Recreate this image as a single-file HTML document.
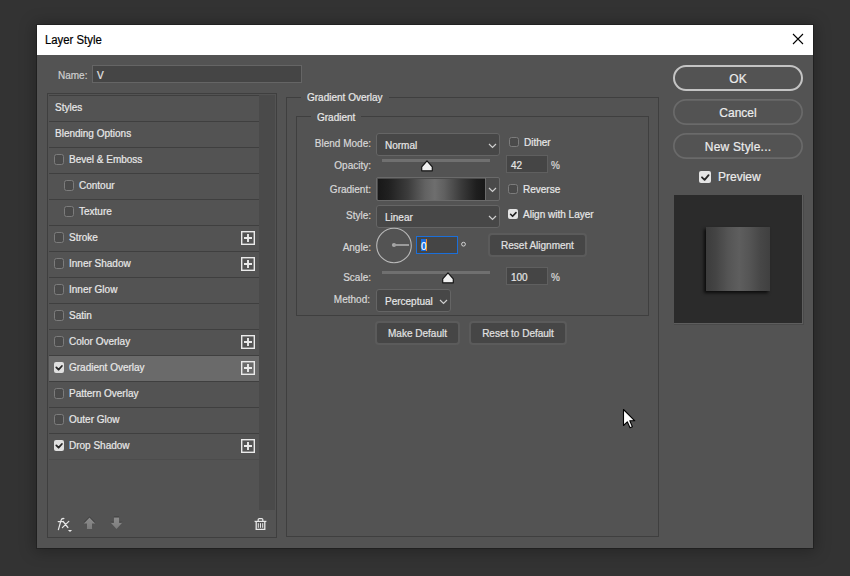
<!DOCTYPE html>
<html><head><meta charset="utf-8">
<style>
*{box-sizing:border-box;margin:0;padding:0}
html,body{width:850px;height:576px;overflow:hidden;background:#333333;font-family:"Liberation Sans",sans-serif;position:relative}
.a{position:absolute}
.t{position:absolute;white-space:nowrap;line-height:20px;-webkit-text-stroke:0.2px currentColor}
svg{display:block}
</style></head><body>
<div class="a" style="left:37px;top:25px;width:776px;height:523px;background:#535353;box-shadow:0 0 0 1px rgba(0,0,0,.22),0 1px 14px 3px rgba(0,0,0,.26)"></div>
<div class="a" style="left:37px;top:25px;width:776px;height:30px;background:#ffffff;"></div>
<div class="t" style="left:45px;top:30px;font-size:12px;color:#000;transform:scaleX(0.945);transform-origin:0 0;">Layer Style</div>
<svg class="a" style="left:792px;top:33px" width="12" height="12" viewBox="0 0 12 12"><path d="M1 1L11 11M11 1L1 11" stroke="#000" stroke-width="1.1" fill="none"/></svg>
<div class="t" style="left:58px;top:66px;font-size:10px;color:#cfcfcf;">Name:</div>
<div class="a" style="left:92px;top:65px;width:210px;height:18px;background:#454545;border:1px solid #656565;"></div>
<div class="t" style="left:97px;top:66px;font-size:10px;color:#e6e6e6;">V</div>
<div class="a" style="left:47px;top:93px;width:230px;height:445px;border:1px solid #3f3f3f;"></div>
<div class="a" style="left:259px;top:95px;width:16px;height:415px;background:#4a4a4a;"></div>
<div class="a" style="left:49px;top:95px;width:210px;height:1px;background:#3f3f3f;"></div>
<div class="t" style="left:55px;top:98px;font-size:10px;color:#e8e8e8;">Styles</div>
<div class="a" style="left:49px;top:121px;width:210px;height:1px;background:#3f3f3f;"></div>
<div class="t" style="left:55px;top:124px;font-size:10px;color:#e8e8e8;">Blending Options</div>
<div class="a" style="left:49px;top:147px;width:210px;height:1px;background:#3f3f3f;"></div>
<div class="a" style="left:54px;top:154px;width:10px;height:11px;border-radius:2.5px;border:1px solid #7c7c7c;background:#4a4a4a"></div>
<div class="t" style="left:69px;top:150px;font-size:10px;color:#e8e8e8;">Bevel &amp; Emboss</div>
<div class="a" style="left:49px;top:173px;width:210px;height:1px;background:#3f3f3f;"></div>
<div class="a" style="left:64px;top:180px;width:10px;height:11px;border-radius:2.5px;border:1px solid #7c7c7c;background:#4a4a4a"></div>
<div class="t" style="left:79px;top:176px;font-size:10px;color:#e8e8e8;">Contour</div>
<div class="a" style="left:49px;top:199px;width:210px;height:1px;background:#3f3f3f;"></div>
<div class="a" style="left:64px;top:206px;width:10px;height:11px;border-radius:2.5px;border:1px solid #7c7c7c;background:#4a4a4a"></div>
<div class="t" style="left:79px;top:202px;font-size:10px;color:#e8e8e8;">Texture</div>
<div class="a" style="left:49px;top:225px;width:210px;height:1px;background:#3f3f3f;"></div>
<div class="a" style="left:54px;top:232px;width:10px;height:11px;border-radius:2.5px;border:1px solid #7c7c7c;background:#4a4a4a"></div>
<div class="t" style="left:69px;top:228px;font-size:10px;color:#e8e8e8;">Stroke</div>
<svg class="a" style="left:241px;top:231px" width="14" height="14" viewBox="0 0 14 14"><rect x="0.7" y="0.7" width="12.6" height="12.6" fill="none" stroke="#eaeaea" stroke-width="1.4"/><path d="M7 3V11M3 7H11" stroke="#eaeaea" stroke-width="1.9"/></svg>
<div class="a" style="left:49px;top:251px;width:210px;height:1px;background:#3f3f3f;"></div>
<div class="a" style="left:54px;top:258px;width:10px;height:11px;border-radius:2.5px;border:1px solid #7c7c7c;background:#4a4a4a"></div>
<div class="t" style="left:69px;top:254px;font-size:10px;color:#e8e8e8;">Inner Shadow</div>
<svg class="a" style="left:241px;top:257px" width="14" height="14" viewBox="0 0 14 14"><rect x="0.7" y="0.7" width="12.6" height="12.6" fill="none" stroke="#eaeaea" stroke-width="1.4"/><path d="M7 3V11M3 7H11" stroke="#eaeaea" stroke-width="1.9"/></svg>
<div class="a" style="left:49px;top:277px;width:210px;height:1px;background:#3f3f3f;"></div>
<div class="a" style="left:54px;top:284px;width:10px;height:11px;border-radius:2.5px;border:1px solid #7c7c7c;background:#4a4a4a"></div>
<div class="t" style="left:69px;top:280px;font-size:10px;color:#e8e8e8;">Inner Glow</div>
<div class="a" style="left:49px;top:303px;width:210px;height:1px;background:#3f3f3f;"></div>
<div class="a" style="left:54px;top:310px;width:10px;height:11px;border-radius:2.5px;border:1px solid #7c7c7c;background:#4a4a4a"></div>
<div class="t" style="left:69px;top:306px;font-size:10px;color:#e8e8e8;">Satin</div>
<div class="a" style="left:49px;top:329px;width:210px;height:1px;background:#3f3f3f;"></div>
<div class="a" style="left:54px;top:336px;width:10px;height:11px;border-radius:2.5px;border:1px solid #7c7c7c;background:#4a4a4a"></div>
<div class="t" style="left:69px;top:332px;font-size:10px;color:#e8e8e8;">Color Overlay</div>
<svg class="a" style="left:241px;top:335px" width="14" height="14" viewBox="0 0 14 14"><rect x="0.7" y="0.7" width="12.6" height="12.6" fill="none" stroke="#eaeaea" stroke-width="1.4"/><path d="M7 3V11M3 7H11" stroke="#eaeaea" stroke-width="1.9"/></svg>
<div class="a" style="left:49px;top:356px;width:210px;height:25px;background:#6a6a6a;"></div>
<div class="a" style="left:49px;top:355px;width:210px;height:1px;background:#3f3f3f;"></div>
<div class="a" style="left:54px;top:362px;width:10px;height:11px;border-radius:2px;background:#e0e0e0"></div>
<svg class="a" style="left:54px;top:362px" width="10" height="11" viewBox="0 0 10 11"><path d="M2.3 5.4L4.6 7.7L7.9 4" stroke="#262626" stroke-width="1.8" fill="none" stroke-linecap="round" stroke-linejoin="round"/></svg>
<div class="t" style="left:69px;top:358px;font-size:10px;color:#e8e8e8;">Gradient Overlay</div>
<svg class="a" style="left:241px;top:361px" width="14" height="14" viewBox="0 0 14 14"><rect x="0.7" y="0.7" width="12.6" height="12.6" fill="none" stroke="#eaeaea" stroke-width="1.4"/><path d="M7 3V11M3 7H11" stroke="#eaeaea" stroke-width="1.9"/></svg>
<div class="a" style="left:49px;top:381px;width:210px;height:1px;background:#3f3f3f;"></div>
<div class="a" style="left:54px;top:388px;width:10px;height:11px;border-radius:2.5px;border:1px solid #7c7c7c;background:#4a4a4a"></div>
<div class="t" style="left:69px;top:384px;font-size:10px;color:#e8e8e8;">Pattern Overlay</div>
<div class="a" style="left:49px;top:407px;width:210px;height:1px;background:#3f3f3f;"></div>
<div class="a" style="left:54px;top:414px;width:10px;height:11px;border-radius:2.5px;border:1px solid #7c7c7c;background:#4a4a4a"></div>
<div class="t" style="left:69px;top:410px;font-size:10px;color:#e8e8e8;">Outer Glow</div>
<div class="a" style="left:49px;top:433px;width:210px;height:1px;background:#3f3f3f;"></div>
<div class="a" style="left:54px;top:440px;width:10px;height:11px;border-radius:2px;background:#e0e0e0"></div>
<svg class="a" style="left:54px;top:440px" width="10" height="11" viewBox="0 0 10 11"><path d="M2.3 5.4L4.6 7.7L7.9 4" stroke="#262626" stroke-width="1.8" fill="none" stroke-linecap="round" stroke-linejoin="round"/></svg>
<div class="t" style="left:69px;top:436px;font-size:10px;color:#e8e8e8;">Drop Shadow</div>
<svg class="a" style="left:241px;top:439px" width="14" height="14" viewBox="0 0 14 14"><rect x="0.7" y="0.7" width="12.6" height="12.6" fill="none" stroke="#eaeaea" stroke-width="1.4"/><path d="M7 3V11M3 7H11" stroke="#eaeaea" stroke-width="1.9"/></svg>
<div class="a" style="left:49px;top:459px;width:210px;height:1px;background:#4c4c4c;"></div>
<svg class="a" style="left:52px;top:512px" width="26" height="24" viewBox="0 0 26 24"><path d="M6.4 17.6L9.1 8.2Q9.8 6.1 11.9 6.6M6.2 9.5H10.8M11.2 9.5L15.9 15.5M16.8 9.4L10.4 15.6" stroke="#e6e6e6" stroke-width="1.25" fill="none" stroke-linecap="round"/><path d="M15.9 18H20.1L18 19.9Z" fill="#e6e6e6"/></svg>
<svg class="a" style="left:83px;top:516px" width="13" height="14" viewBox="0 0 13 14"><defs><linearGradient id="ag" x1="0" y1="0" x2="0" y2="1"><stop offset="0" stop-color="#8c8c8c"/><stop offset="1" stop-color="#7c7c7c"/></linearGradient></defs><path d="M6.5 0.4L12.4 6.6H9.2V12.2H3.8V6.6H0.6Z" fill="#3c3c3c"/><path d="M6.5 1.4L12.2 7.4H9.1V13H3.9V7.4H0.8Z" fill="url(#ag)"/></svg>
<svg class="a" style="left:110px;top:516px" width="13" height="14" viewBox="0 0 13 14"><path d="M3.9 0.6H9.1V5.8H12.3L6.5 12L0.7 5.8H3.9Z" fill="#3c3c3c"/><path d="M3.9 1.6H9.1V6.8H12.2L6.5 13L0.8 6.8H3.9Z" fill="url(#ag)"/></svg>
<svg class="a" style="left:254px;top:517px" width="13" height="14" viewBox="0 0 13 14"><path d="M0.6 4.4H12.4" stroke="#e8e8e8" stroke-width="1.2" fill="none"/><path d="M4.2 4.4V2.6Q4.2 1.6 5.2 1.6H7.8Q8.8 1.6 8.8 2.6V4.4" stroke="#e8e8e8" stroke-width="1.2" fill="none"/><path d="M2.2 4.4V12.4H10.8V4.4" stroke="#e8e8e8" stroke-width="1.3" fill="none"/><path d="M4.3 6.2V10.8M6.5 6.2V10.8M8.7 6.2V10.8" stroke="#e8e8e8" stroke-width="1" fill="none"/></svg>
<div class="a" style="left:286px;top:97px;width:1px;height:440px;background:#3f3f3f;"></div>
<div class="a" style="left:658px;top:97px;width:1px;height:440px;background:#3f3f3f;"></div>
<div class="a" style="left:286px;top:536px;width:373px;height:1px;background:#3f3f3f;"></div>
<div class="a" style="left:286px;top:97px;width:15px;height:1px;background:#3f3f3f;"></div>
<div class="a" style="left:389px;top:97px;width:270px;height:1px;background:#3f3f3f;"></div>
<div class="t" style="left:307px;top:88px;font-size:10px;color:#e8e8e8;">Gradient Overlay</div>
<div class="a" style="left:296px;top:116px;width:1px;height:200px;background:#3f3f3f;"></div>
<div class="a" style="left:648px;top:116px;width:1px;height:200px;background:#3f3f3f;"></div>
<div class="a" style="left:296px;top:315px;width:353px;height:1px;background:#3f3f3f;"></div>
<div class="a" style="left:296px;top:116px;width:15px;height:1px;background:#3f3f3f;"></div>
<div class="a" style="left:361px;top:116px;width:288px;height:1px;background:#3f3f3f;"></div>
<div class="t" style="left:317px;top:108px;font-size:10px;color:#e8e8e8;">Gradient</div>
<div class="t" style="right:479px;top:134px;font-size:10px;color:#d8d8d8;">Blend Mode:</div>
<div class="t" style="right:479px;top:156px;font-size:10px;color:#d8d8d8;">Opacity:</div>
<div class="t" style="right:479px;top:180px;font-size:10px;color:#d8d8d8;">Gradient:</div>
<div class="t" style="right:479px;top:206px;font-size:10px;color:#d8d8d8;">Style:</div>
<div class="t" style="right:479px;top:238px;font-size:10px;color:#d8d8d8;">Angle:</div>
<div class="t" style="right:479px;top:268px;font-size:10px;color:#d8d8d8;">Scale:</div>
<div class="t" style="right:480px;top:290px;font-size:10px;color:#d8d8d8;">Method:</div>
<div class="a" style="left:376px;top:133px;width:124px;height:23px;background:#474747;border:1px solid #656565;border-radius:3px;"></div>
<div class="t" style="left:385px;top:136px;font-size:10px;color:#e6e6e6;">Normal</div>
<svg class="a" style="left:488px;top:143px" width="9" height="6" viewBox="0 0 9 6"><path d="M1 1L4.5 4.5L8 1" stroke="#cfcfcf" stroke-width="1.2" fill="none"/></svg>
<div class="a" style="left:376px;top:205px;width:124px;height:23px;background:#474747;border:1px solid #656565;border-radius:3px;"></div>
<div class="t" style="left:385px;top:208px;font-size:10px;color:#e6e6e6;">Linear</div>
<svg class="a" style="left:488px;top:215px" width="9" height="6" viewBox="0 0 9 6"><path d="M1 1L4.5 4.5L8 1" stroke="#cfcfcf" stroke-width="1.2" fill="none"/></svg>
<div class="a" style="left:376px;top:289px;width:75px;height:23px;background:#474747;border:1px solid #656565;border-radius:3px;"></div>
<div class="t" style="left:385px;top:292px;font-size:10px;color:#e6e6e6;">Perceptual</div>
<svg class="a" style="left:439px;top:299px" width="9" height="6" viewBox="0 0 9 6"><path d="M1 1L4.5 4.5L8 1" stroke="#cfcfcf" stroke-width="1.2" fill="none"/></svg>
<div class="a" style="left:376px;top:177px;width:124px;height:24px;background:#4a4a4a;border:1px solid #6a6a6a;border-radius:2px;"></div>
<div class="a" style="left:378px;top:179px;width:107px;height:21px;background:linear-gradient(90deg,#181818 0%,#202020 10%,#3c3c3c 28%,#626262 44%,#6e6e6e 53%,#606060 62%,#3a3a3a 78%,#1e1e1e 92%,#181818 100%);"></div>
<div class="a" style="left:485px;top:178px;width:1px;height:22px;background:#6a6a6a;"></div>
<svg class="a" style="left:488px;top:187px" width="9" height="6" viewBox="0 0 9 6"><path d="M1 1L4.5 4.5L8 1" stroke="#cfcfcf" stroke-width="1.2" fill="none"/></svg>
<div class="a" style="left:382px;top:159px;width:108px;height:3px;background:#707070;"></div>
<svg class="a" style="left:420px;top:159px" width="14" height="13" viewBox="0 0 14 13"><path d="M7 1.9L12.3 7.9V11.8H1.7V7.9Z" fill="#f0f0f0" stroke="#151515" stroke-width="1.2" stroke-linejoin="round"/></svg>
<div class="a" style="left:382px;top:271px;width:108px;height:3px;background:#707070;"></div>
<svg class="a" style="left:441px;top:271px" width="14" height="13" viewBox="0 0 14 13"><path d="M7 1.9L12.3 7.9V11.8H1.7V7.9Z" fill="#f0f0f0" stroke="#151515" stroke-width="1.2" stroke-linejoin="round"/></svg>
<div class="a" style="left:506px;top:155px;width:42px;height:18px;background:#454545;border:1px solid #5f5f5f;"></div>
<div class="t" style="left:511px;top:156px;font-size:10px;color:#e6e6e6;">42</div>
<div class="a" style="left:506px;top:267px;width:42px;height:18px;background:#454545;border:1px solid #5f5f5f;"></div>
<div class="t" style="left:511px;top:268px;font-size:10px;color:#e6e6e6;">100</div>
<div class="t" style="left:551px;top:156px;font-size:10px;color:#d8d8d8;">%</div>
<div class="t" style="left:551px;top:268px;font-size:10px;color:#d8d8d8;">%</div>
<div class="a" style="left:509px;top:137px;width:10px;height:10px;border-radius:2.5px;border:1px solid #7c7c7c;background:#4a4a4a"></div>
<div class="t" style="left:524px;top:133px;font-size:10px;color:#e8e8e8;">Dither</div>
<div class="a" style="left:508px;top:184px;width:10px;height:10px;border-radius:2.5px;border:1px solid #7c7c7c;background:#4a4a4a"></div>
<div class="t" style="left:523px;top:180px;font-size:10px;color:#e8e8e8;">Reverse</div>
<div class="a" style="left:508px;top:209px;width:10px;height:10px;border-radius:2px;background:#e4e4e4"></div>
<svg class="a" style="left:508px;top:209px" width="10" height="10" viewBox="0 0 10 10"><path d="M2.6 5.3L4.6 7.3L8 3.6" stroke="#222" stroke-width="1.6" fill="none" stroke-linecap="round" stroke-linejoin="round"/></svg>
<div class="t" style="left:523px;top:205px;font-size:10px;color:#e8e8e8;">Align with Layer</div>
<svg class="a" style="left:375px;top:227px" width="38" height="38" viewBox="0 0 38 38"><circle cx="19" cy="18.5" r="17.3" fill="none" stroke="#b8b8b8" stroke-width="1.1"/><circle cx="19" cy="18" r="2.1" fill="#a8a8a8"/><path d="M19 18H34" stroke="#a0a0a0" stroke-width="1.9"/></svg>
<div class="a" style="left:416px;top:236px;width:42px;height:18px;background:#454545;border:1.4px solid #1b6fda;"></div>
<div class="a" style="left:421px;top:239px;width:5px;height:12px;background:#1a6ee0;"></div>
<div class="a" style="left:426px;top:239px;width:1px;height:12px;background:#f08a24;"></div>
<div class="t" style="left:421px;top:237px;font-size:10px;color:#ffffff;">0</div>
<svg class="a" style="left:460px;top:241px" width="7" height="7" viewBox="0 0 7 7"><circle cx="3.5" cy="3.2" r="1.9" fill="none" stroke="#d4d4d4" stroke-width="1"/></svg>
<div class="a" style="left:488px;top:233px;width:99px;height:24px;background:#464646;border:2px solid #5b5b5b;border-radius:4px;"></div>
<div class="t" style="left:337.5px;width:400px;text-align:center;top:236px;font-size:10px;color:#e2e2e2;">Reset Alignment</div>
<div class="a" style="left:375px;top:321px;width:85px;height:24px;background:#464646;border:2px solid #5b5b5b;border-radius:4px;"></div>
<div class="t" style="left:217.5px;width:400px;text-align:center;top:324px;font-size:10px;color:#e2e2e2;">Make Default</div>
<div class="a" style="left:469px;top:321px;width:98px;height:24px;background:#464646;border:2px solid #5b5b5b;border-radius:4px;"></div>
<div class="t" style="left:318.0px;width:400px;text-align:center;top:324px;font-size:10px;color:#e2e2e2;">Reset to Default</div>
<svg class="a" style="left:673px;top:65px" width="130" height="26" viewBox="0 0 130 26"><rect x="1.0" y="1.0" width="128" height="24" rx="12.0" fill="none" stroke="#c4c4c4" stroke-width="2"/></svg>
<div class="t" style="left:538.0px;width:400px;text-align:center;top:69px;font-size:12px;color:#ececec;">OK</div>
<svg class="a" style="left:673px;top:99px" width="130" height="26" viewBox="0 0 130 26"><rect x="0.85" y="0.85" width="128.3" height="24.3" rx="12.15" fill="none" stroke="#6a6a6a" stroke-width="1.7"/></svg>
<div class="t" style="left:538.0px;width:400px;text-align:center;top:103px;font-size:12px;color:#ececec;">Cancel</div>
<svg class="a" style="left:673px;top:133px" width="130" height="26" viewBox="0 0 130 26"><rect x="0.85" y="0.85" width="128.3" height="24.3" rx="12.15" fill="none" stroke="#6a6a6a" stroke-width="1.7"/></svg>
<div class="t" style="left:538.0px;width:400px;text-align:center;top:137px;font-size:12px;color:#ececec;letter-spacing:0.2px;">New Style...</div>
<div class="a" style="left:699px;top:171px;width:12px;height:12px;border-radius:2px;background:#e4e4e4"></div>
<svg class="a" style="left:699px;top:171px" width="12" height="12" viewBox="0 0 12 12"><path d="M3 6.3L5.6 8.8L9.6 4.2" stroke="#242424" stroke-width="1.8" fill="none" stroke-linecap="round" stroke-linejoin="round"/></svg>
<div class="t" style="left:718px;top:167px;font-size:12px;color:#ececec;">Preview</div>
<div class="a" style="left:674px;top:195px;width:128px;height:128px;background:#2b2b2b;"></div>
<div class="a" style="left:802px;top:195px;width:1px;height:129px;background:#5e5e5e;"></div>
<div class="a" style="left:674px;top:323px;width:129px;height:1px;background:#5e5e5e;"></div>
<div class="a" style="left:803px;top:195px;width:1px;height:130px;background:#4a4a4a;"></div>
<div class="a" style="left:674px;top:324px;width:130px;height:1px;background:#4a4a4a;"></div>
<div class="a" style="left:706px;top:227px;width:64px;height:64px;background:linear-gradient(90deg,#3c3c3c 0%,#444444 15%,#555555 35%,#5e5e5e 52%,#555555 68%,#474747 85%,#404040 100%);box-shadow:-2px 2px 3px rgba(0,0,0,.75);"></div>
<svg class="a" style="left:622px;top:408px" width="14" height="22" viewBox="0 0 14 22"><path d="M1.5 1.5V17.5L5.3 13.8L8 19.8L10.4 18.8L7.8 12.8H12.8Z" fill="#fff" stroke="#000" stroke-width="1.1" stroke-linejoin="round"/></svg>
</body></html>
